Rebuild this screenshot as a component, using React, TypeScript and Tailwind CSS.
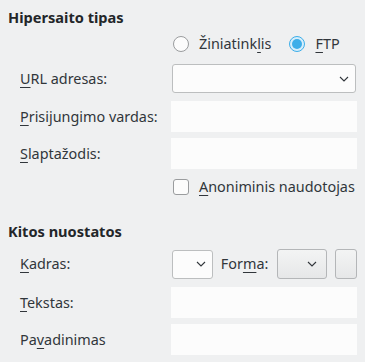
import React from "react";

const Chevron = () => (
  <svg width="10" height="6" viewBox="0 0 10 6" className="shrink-0">
    <path d="M1 1 L5 5 L9 1" fill="none" stroke="#31363b" strokeWidth="1.1" />
  </svg>
);

const Label = ({ children }: { children: React.ReactNode }) => (
  <div className="w-[163px] pl-[12px] shrink-0">{children}</div>
);

const Field = () => <div className="w-[186px] h-[31px] bg-[#fcfcfc]" />;

export default function App() {
  return (
    <div
      className="w-[365px] h-[362px] bg-[#eff0f1] text-[#31363b] text-[14.4px] leading-[18px] px-[8px] pt-[8px] overflow-hidden"
      style={{ fontFamily: '"Noto Sans", "Open Sans", sans-serif' }}
    >
      <div className="font-bold text-[#232629] h-[18px] text-[14.6px]">Hipersaito tipas</div>

      {/* radio row */}
      <div className="mt-[6px] h-[24px] flex items-center pl-[165px]">
        <div className="w-[16px] h-[16px] rounded-full border border-[#9a9c9e] bg-[#fcfcfc] shrink-0" />
        <span className="ml-[10px]">
          Žiniatink<u className="underline-offset-[3px]">l</u>is
        </span>
        <div className="ml-[18px] w-[16px] h-[16px] rounded-full border border-[#3daee9] bg-[#d6eefb] flex items-center justify-center shrink-0">
          <div className="w-[10px] h-[10px] rounded-full bg-[#3daee9]" />
        </div>
        <span className="ml-[10px]">
          <u className="underline-offset-[3px]">F</u>TP
        </span>
      </div>

      {/* URL */}
      <div className="mt-[8px] flex items-center h-[29px]">
        <Label>
          <u className="underline-offset-[3px]">U</u>RL adresas:
        </Label>
        <div className="ml-[1px] w-[184px] h-[29px] rounded-[3px] border border-[#bcbebf] bg-[#fcfcfc] flex items-center justify-end pr-[6px]">
          <Chevron />
        </div>
      </div>

      {/* Prisijungimo */}
      <div className="mt-[8px] flex items-center">
        <Label>
          <u className="underline-offset-[3px]">P</u>risijungimo vardas:
        </Label>
        <Field />
      </div>

      {/* Slaptazodis */}
      <div className="mt-[6px] flex items-center">
        <Label>
          <u className="underline-offset-[3px]">S</u>laptažodis:
        </Label>
        <Field />
      </div>

      {/* checkbox */}
      <div className="mt-[6px] h-[24px] flex items-center pl-[165px]">
        <div className="w-[16px] h-[16px] rounded-[3px] border border-[#9a9c9e] bg-[#fcfcfc] shrink-0" />
        <span className="ml-[10px]">
          <u className="underline-offset-[3px]">A</u>noniminis naudotojas
        </span>
      </div>

      <div className="mt-[23px] font-bold text-[#232629] h-[18px] text-[14.6px]">Kitos nuostatos</div>

      {/* Kadras */}
      <div className="mt-[9px] flex items-center h-[30px]">
        <Label>
          <u className="underline-offset-[3px]">K</u>adras:
        </Label>
        <div className="ml-[1px] w-[41px] h-[29px] rounded-[3px] border border-[#bcbebf] bg-[#fcfcfc] flex items-center justify-end pr-[6px]">
          <Chevron />
        </div>
        <span className="ml-[8px]">
          For<u className="underline-offset-[3px]">m</u>a:
        </span>
        <div className="ml-[9px] w-[50px] h-[30px] rounded-[3px] border border-[#b4b6b8] bg-gradient-to-b from-[#f3f4f4] to-[#e6e7e8] flex items-center justify-end pr-[9px]">
          <Chevron />
        </div>
        <div className="ml-[8px] w-[22px] h-[30px] rounded-[3px] border border-[#b4b6b8] bg-gradient-to-b from-[#f3f4f4] to-[#e6e7e8]" />
      </div>

      {/* Tekstas */}
      <div className="mt-[8px] flex items-center">
        <Label>
          <u className="underline-offset-[3px]">T</u>ekstas:
        </Label>
        <Field />
      </div>

      {/* Pavadinimas */}
      <div className="mt-[6px] flex items-center">
        <Label>
          Pa<u className="underline-offset-[3px]">v</u>adinimas
        </Label>
        <Field />
      </div>
    </div>
  );
}
